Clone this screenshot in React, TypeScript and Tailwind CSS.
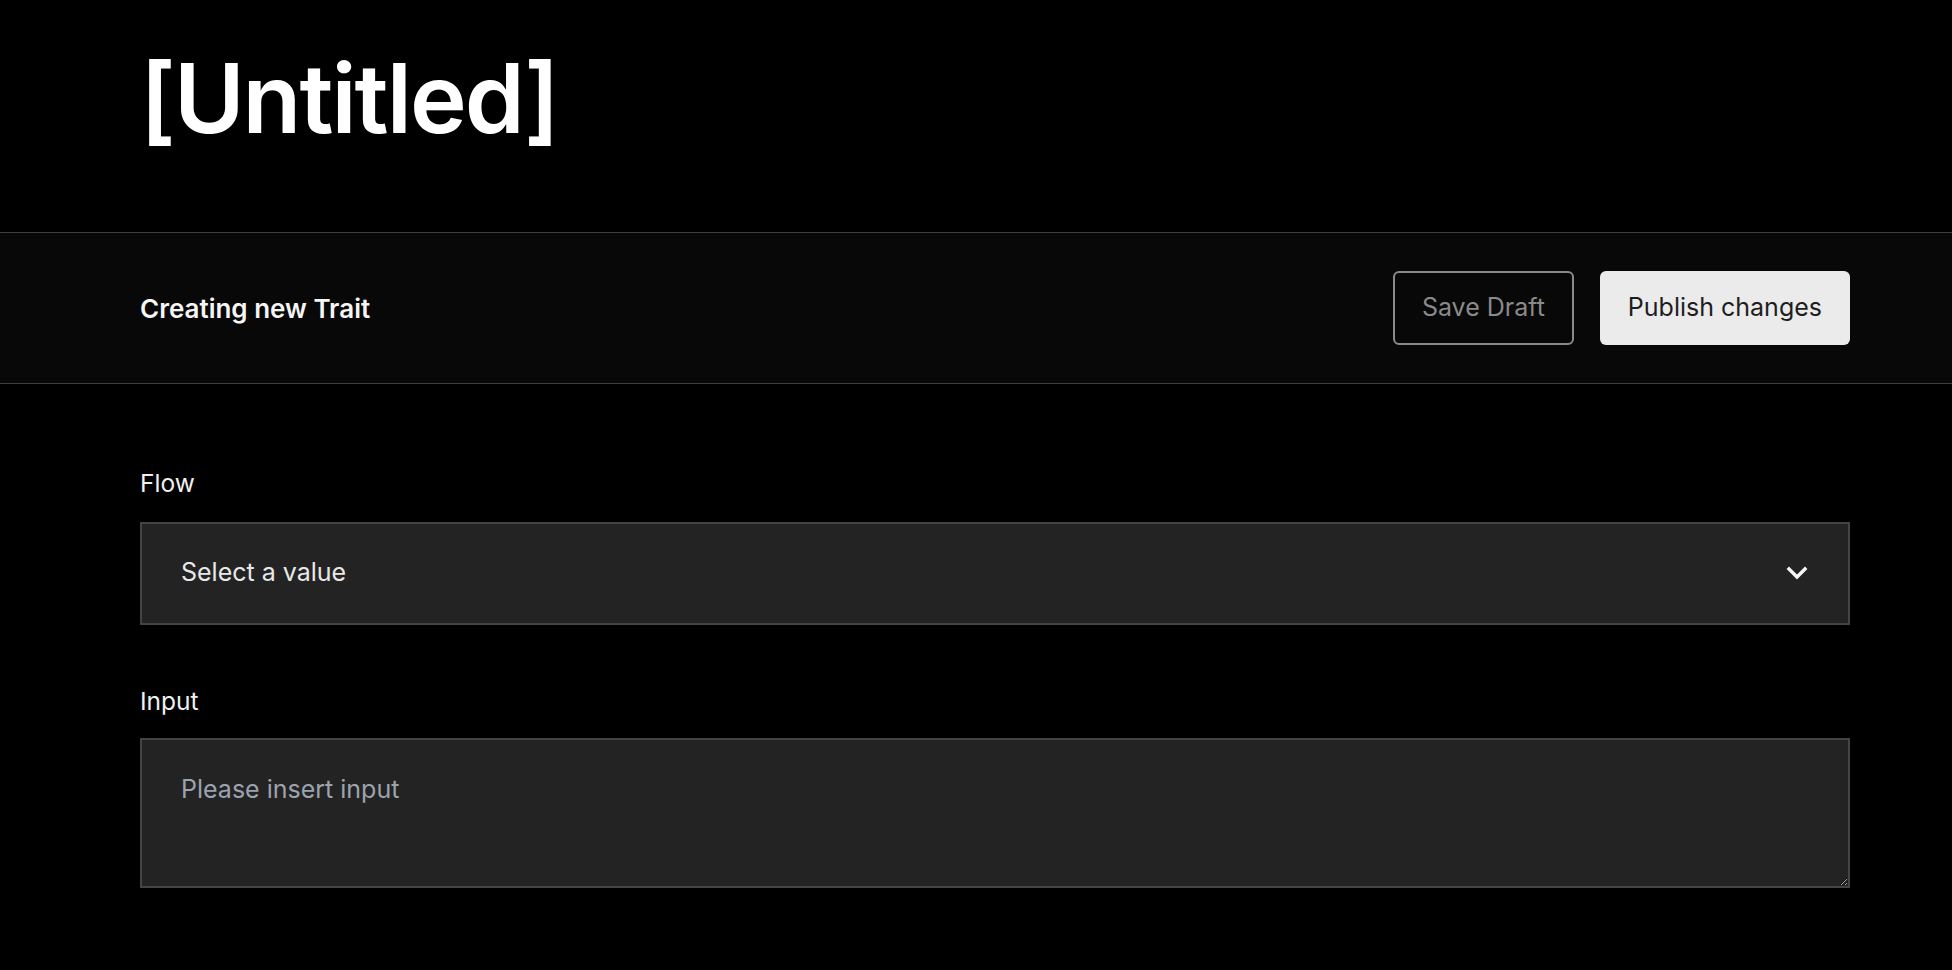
import { useState } from 'react';

function Chevron() {
  return (
    <svg width="22" height="14" viewBox="0 0 22 14" fill="none" className="shrink-0">
      <path d="M3 3l8 8 8-8" stroke="#f5f5f5" strokeWidth="3.4" strokeLinecap="square" />
    </svg>
  );
}

export default function App() {
  const [input, setInput] = useState('');

  return (
    <div className="min-h-[970px] bg-black text-white" style={{ fontFamily: 'Inter, "Noto Sans", sans-serif' }}>
      <header className="pl-[140px] pt-[50px] pb-[86px]">
        <h1 className="text-[96px] leading-none font-semibold tracking-[-0.02em]">[Untitled]</h1>
      </header>

      <div className="border-y border-[#3d3d3d] bg-[#080808]">
        <div className="ml-[140px] w-[1710px] h-[150px] flex items-center justify-between">
          <h2 className="text-[26px] font-semibold text-[#f5f5f5]">Creating new Trait</h2>
          <div className="flex items-center gap-[26px]">
            <button className="h-[74px] px-[27px] rounded-[6px] border-2 border-[#8a8a8a] text-[25px] text-[#8a8a8a]">
              Save Draft
            </button>
            <button className="h-[74px] px-[28px] rounded-[6px] bg-[#ebebeb] text-[25px] text-[#1e1e1e]">
              Publish changes
            </button>
          </div>
        </div>
      </div>

      <main className="ml-[140px] w-[1710px] pt-[87px] flex flex-col">
        <label className="text-[24.5px] leading-none text-[#f0f0f0]">Flow</label>
        <button className="mt-[26px] h-[103px] w-full flex items-center justify-between pl-[39px] pr-[40px] bg-[#232323] border-2 border-[#444444] text-[25px] text-[#e8e8e8]">
          <span>Select a value</span>
          <Chevron />
        </button>

        <label className="mt-[64px] text-[24.5px] leading-none text-[#f0f0f0]">Input</label>
        <textarea
          value={input}
          onChange={(e) => setInput(e.target.value)}
          placeholder="Please insert input"
          className="mt-[25px] h-[150px] w-full pt-[31px] pl-[39px] pr-[40px] bg-[#232323] border-2 border-[#444444] text-[25px] leading-[1.5] text-[#e8e8e8] placeholder:text-[#9ca3af] outline-none"
        />
      </main>
    </div>
  );
}
